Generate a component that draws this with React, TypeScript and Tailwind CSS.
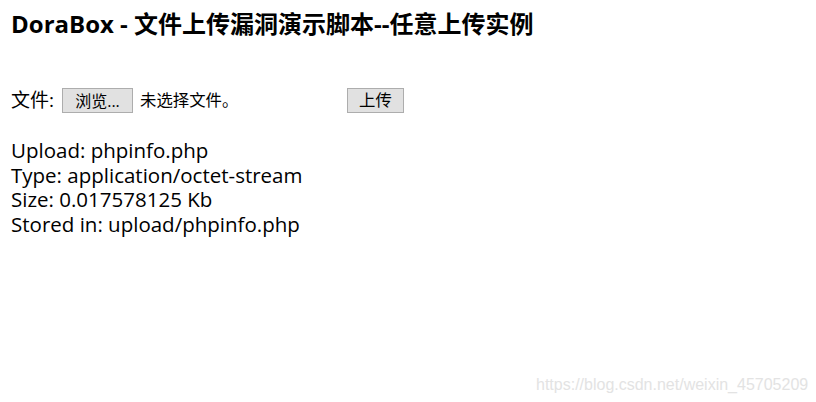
import React from "react"

const sans = "font-['Open_Sans','Noto_Sans_CJK_SC',sans-serif]"

export default function App() {
  return (
    <div className={`relative w-[816px] h-[402px] bg-white text-black ${sans}`}>
      <div className="px-[11px] pt-[9px]">
        <h3 className="text-[24px] font-bold leading-[30px]">
          DoraBox - 文件上传漏洞演示脚本--任意上传实例
        </h3>

        <form className="mt-[49px] flex items-center h-[25px] text-[19px]">
          <span className="mr-[8px]">文件:</span>
          <div className="flex items-center w-[285px]">
            <button
              type="button"
              className="w-[71px] h-[25px] border border-[#adadad] bg-[#e1e1e1] text-[16px] leading-none"
            >
              浏览...
            </button>
            <span className="ml-[7px] text-[16.4px]">未选择文件。</span>
          </div>
          <button
            type="button"
            className="w-[57px] h-[25px] border border-[#adadad] bg-[#e1e1e1] text-[16.4px] leading-none"
          >
            上传
          </button>
        </form>

        <div className="mt-[25px] text-[20.5px] leading-[24.5px]">
          <div>Upload: phpinfo.php</div>
          <div>Type: application/octet-stream</div>
          <div>Size: 0.017578125 Kb</div>
          <div>Stored in: upload/phpinfo.php</div>
        </div>
      </div>

      <div className="absolute left-[536px] top-[373px] text-[16px] text-[#e3e3e3] font-['Liberation_Sans',sans-serif]">
        https://blog.csdn.net/weixin_45705209
      </div>
    </div>
  )
}
